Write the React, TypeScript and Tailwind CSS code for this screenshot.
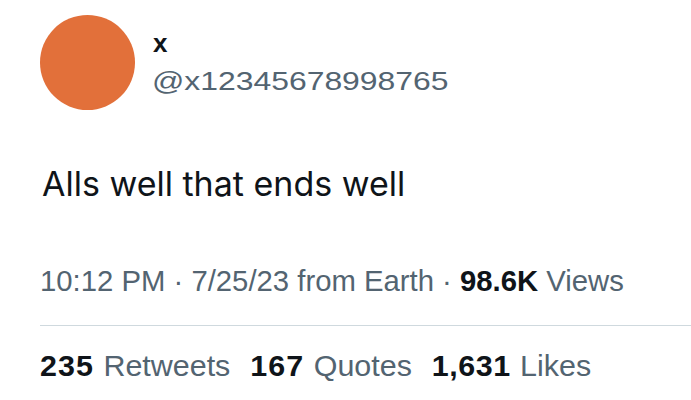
import React from "react";

export default function App() {
  return (
    <div className="w-[691px] h-[400px] bg-white overflow-hidden pl-[40px] pt-[15px] font-['Liberation_Sans',Arial,sans-serif]">
      <div className="flex items-center">
        <div className="w-[95px] h-[95px] rounded-full bg-[#e2703a] shrink-0" />
        <div className="ml-[17px] flex flex-col">
          <div className="text-[26px] leading-[26px] font-bold text-[#0f1419] pl-[1px]">x</div>
          <div className="mt-[10px] text-[25.5px] leading-[30px] text-[#536471] inline-block origin-left scale-x-[1.25] whitespace-nowrap">
            @x12345678998765
          </div>
        </div>
      </div>
      <div className="mt-[54px] pl-[2px] text-[34px] leading-[40px] text-[#0f1419] font-['Inter',sans-serif]">
        Alls well that ends well
      </div>
      <div className="mt-[60px] text-[29px] leading-[34px] text-[#536471] whitespace-nowrap origin-left scale-x-[1.01]">
        10:12 PM · 7/25/23 from Earth · <span className="font-bold text-[#0f1419]">98.6K</span> Views
      </div>
      <div className="mt-[27px] h-px bg-[#cfd9de]" />
      <div className="mt-[23px] flex gap-[19px] text-[29px] leading-[34px] text-[#536471] whitespace-nowrap origin-left scale-x-[1.05]">
        <span className="flex gap-[9px]">
          <span className="font-bold text-[#0f1419] tracking-[1px]">235</span>
          <span>Retweets</span>
        </span>
        <span className="flex gap-[9px]">
          <span className="font-bold text-[#0f1419] tracking-[1px]">167</span>
          <span>Quotes</span>
        </span>
        <span className="flex gap-[9px]">
          <span className="font-bold text-[#0f1419] tracking-[0.5px]">1,631</span>
          <span>Likes</span>
        </span>
      </div>
    </div>
  );
}
